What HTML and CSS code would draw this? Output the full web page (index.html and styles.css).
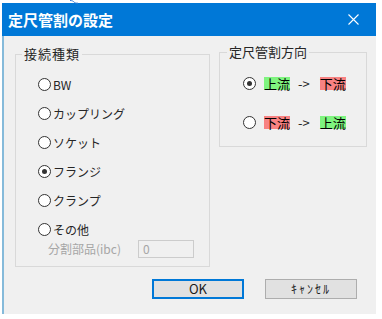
FILE: index.html
```html
<!DOCTYPE html>
<html lang="ja">
<head>
<meta charset="utf-8">
<title>定尺管割の設定</title>
<link rel="stylesheet" href="styles.css">
</head>
<body>
<svg class="squiggle" width="10" height="4" viewBox="0 0 10 4"><path d="M1 0.5 C3 0.5 4 1 5 2 C6 3 7 3.2 9 3.2" fill="none" stroke="#3a7fd5" stroke-width="1"/></svg>
<div class="dialog">
  <div class="titlebar">
    <span class="title">定尺管割の設定</span>
    <svg class="close" width="11" height="11" viewBox="0 0 11 11"><path d="M0.5 0.5 L10.5 10.5 M10.5 0.5 L0.5 10.5" stroke="#fff" stroke-width="1.1" fill="none"/></svg>
  </div>
  <div class="content">
    <div class="groups">
      <fieldset class="group group-left">
        <legend>接続種類</legend>
        <div class="opts">
          <div class="opt"><span class="radio"></span><span>BW</span></div>
          <div class="opt"><span class="radio"></span><span>カップリング</span></div>
          <div class="opt"><span class="radio"></span><span>ソケット</span></div>
          <div class="opt"><span class="radio checked"></span><span>フランジ</span></div>
          <div class="opt"><span class="radio"></span><span>クランプ</span></div>
          <div class="opt"><span class="radio"></span><span>その他</span></div>
          <div class="ibc"><span class="ibc-label">分割部品(ibc)</span><span class="ibc-input">0</span></div>
        </div>
      </fieldset>
      <fieldset class="group group-right">
        <legend>定尺管割方向</legend>
        <div class="dir-row first"><span class="radio checked"></span><span class="up">上流</span><span class="arrow">-&gt;</span><span class="down">下流</span></div>
        <div class="dir-row"><span class="radio"></span><span class="down">下流</span><span class="arrow">-&gt;</span><span class="up">上流</span></div>
      </fieldset>
    </div>
    <div class="buttons">
      <div class="btn btn-ok">OK</div>
      <div class="btn btn-cancel">ｷｬﾝｾﾙ</div>
    </div>
  </div>
</div>
</body>
</html>
```
FILE: styles.css
```css
html, body {
  margin: 0;
  padding: 0;
  background: #ffffff;
  font-family: "Noto Sans CJK JP", "Noto Sans", sans-serif;
}
body {
  position: relative;
  width: 382px;
  height: 319px;
  overflow: hidden;
}
.squiggle {
  position: absolute;
  left: 69px;
  top: 0;
}
.dialog {
  margin: 3px 0 0 2px;
  width: 374px;
  height: 311px;
  display: flex;
  flex-direction: column;
}
.titlebar {
  height: 33px;
  background: #0078d7;
  display: flex;
  align-items: center;
  justify-content: space-between;
  padding: 0 17px 0 6px;
  flex: none;
}
.title {
  color: #ffffff;
  font-size: 15px;
  font-weight: bold;
  line-height: 18px;
}
.close {
  display: block;
}
.content {
  flex: 1;
  background: #f0f0f0;
  border-left: 2px solid #85bada;
  display: flex;
  flex-direction: column;
}
.groups {
  display: flex;
  align-items: flex-start;
  padding-left: 11px;
}
.group {
  box-sizing: border-box;
  border: 1px solid #d9d9d9;
  margin: 0;
  padding: 0;
  min-width: 0;
  font-size: 13px;
  color: #262626;
}
.group legend {
  padding: 0 2px;
  line-height: 16px;
  font-size: 13px;
}
.group-left {
  width: 195px;
  height: 221px;
  margin-top: 10px;
}
.group-left legend {
  margin-left: 6px;
  letter-spacing: 1px;
}
.opts {
  padding: 8px 0 0 22px;
  font-size: 12px;
}
.opt {
  height: 29px;
  display: flex;
  align-items: center;
  line-height: 16px;
}
.radio {
  box-sizing: border-box;
  width: 13px;
  height: 13px;
  border: 1px solid #333333;
  border-radius: 50%;
  background: #ffffff;
  margin-right: 2px;
  display: flex;
  align-items: center;
  justify-content: center;
  flex: none;
}
.radio.checked::after {
  content: "";
  width: 5px;
  height: 5px;
  border-radius: 50%;
  background: #333333;
}
.ibc {
  display: flex;
  align-items: center;
  height: 20px;
  margin-top: -5px;
  padding-left: 10px;
}
.ibc-label {
  color: #a6a6a6;
  width: 90px;
  line-height: 16px;
}
.ibc-input {
  box-sizing: border-box;
  width: 56px;
  height: 18px;
  border: 1px solid #cccccc;
  color: #a6a6a6;
  font-size: 12px;
  line-height: 16px;
  padding-left: 4px;
}
.group-right {
  width: 148px;
  height: 103px;
  margin: 8px 0 0 9px;
  padding-left: 23px;
}
.group-right legend {
  margin-left: -16px;
}
.dir-row {
  display: flex;
  align-items: center;
  height: 20px;
  margin-top: 19px;
  line-height: 13px;
}
.dir-row.first {
  margin-top: 13px;
}
.dir-row .radio {
  margin-right: 8px;
}
.up {
  background: #7ff47f;
  color: #000;
  height: 13px;
}
.down {
  background: #f88282;
  color: #000;
  height: 13px;
}
.arrow {
  margin: 0 10px 0 8px;
}
.buttons {
  display: flex;
  justify-content: flex-end;
  gap: 21px;
  padding-right: 19px;
  margin-top: 12px;
}
.btn {
  box-sizing: border-box;
  width: 92px;
  height: 20px;
  background: #e1e1e1;
  border: 1px solid #adadad;
  font-size: 13px;
  line-height: 18px;
  text-align: center;
  color: #1a1a1a;
}
.btn-cancel {
  letter-spacing: 2px;
  font-size: 12px;
}
.btn-ok {
  border: 2px solid #0078d7;
  line-height: 16px;
}
```
